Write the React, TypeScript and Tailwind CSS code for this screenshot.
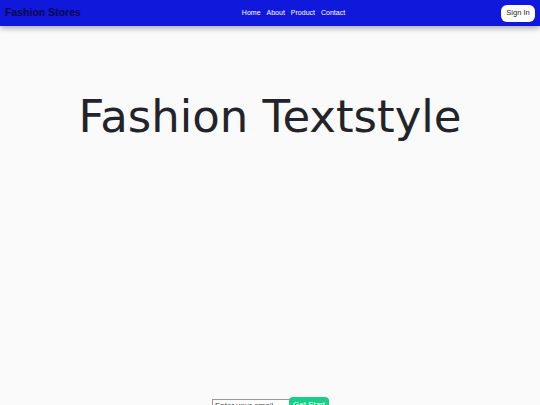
export default function App() {
  return (
    <div className="min-h-screen bg-[#fafafa] font-['Liberation_Sans',Arial,sans-serif]">
      <header className="h-[26px] bg-[#1018dc] flex items-center px-[5px] shadow-[0_2px_6px_rgba(0,0,0,0.35)] relative">
        <h1 className="text-[10.5px] font-bold text-[#0a0a48]">Fashion Stores</h1>
        <nav className="flex gap-[6px] text-[7px] text-white ml-[161px]">
          <a>Home</a>
          <a>About</a>
          <a>Product</a>
          <a>Contact</a>
        </nav>
        <button className="ml-auto h-[17px] w-[34px] bg-white rounded-[6px] text-[7.5px] text-[#222]">Sign In</button>
      </header>

      <section className="h-[371px] pt-[65px] text-center">
        <h2 className="text-[45px] text-[#222429] font-['DejaVu_Sans',sans-serif] leading-[52px]">
          Fashion Textstyle
        </h2>
      </section>

      <form className="flex justify-center items-start pl-[1px]">
        <input
          placeholder="Enter your email"
          className="w-[78px] h-[12px] mt-[2px] border border-[#999] bg-white text-[8px] leading-[10px] px-[2px] py-0 placeholder:text-[#444]"
        />
        <button type="button" className="h-[18px] w-[40px] -ml-[1px] bg-[#16d08a] text-white text-[8px] leading-[10px] rounded-[4px] pt-[3px] flex justify-center items-start">
          Get Start
        </button>
      </form>
    </div>
  );
}
